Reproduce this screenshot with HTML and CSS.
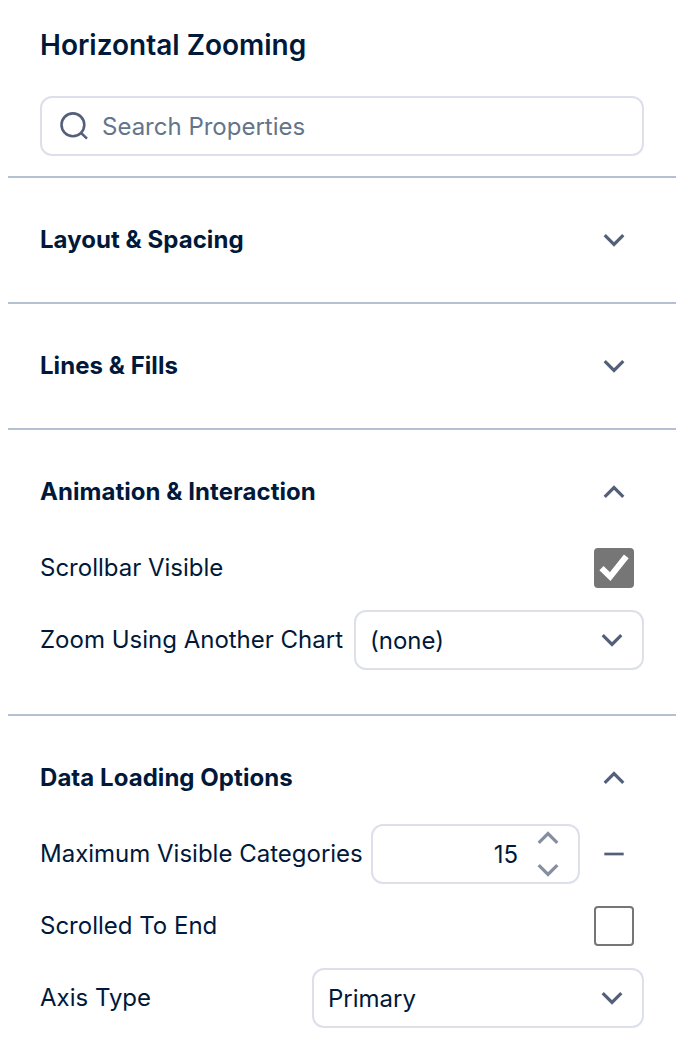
FILE: index.html
```
<!DOCTYPE html>
<html lang="en">
<head>
  <meta charset="UTF-8" />
  <title>Horizontal Zooming</title>
  <link rel="stylesheet" href="styles.css">
</head>
<body>

  <!-- Shared icons -->
  <svg class="sprite" xmlns="http://www.w3.org/2000/svg">
    <symbol id="down" viewBox="0 0 24 16"><path d="M2.7 3.2 L12 12.4 L21.3 3.2" /></symbol>
    <symbol id="up" viewBox="0 0 24 16"><path d="M2.7 12.8 L12 3.6 L21.3 12.8" /></symbol>
  </svg>

  <div class="panel">
    <div class="panel-top">
      <h1>Horizontal Zooming</h1>
      <label class="search">
        <svg class="search-icon" viewBox="0 0 32 32"><circle cx="14.9" cy="14.8" r="11.4" /><path d="M23 22.9 L29 28.6" /></svg>
        <input type="text" placeholder="Search Properties">
      </label>
    </div>

    <div class="section">
      <div class="section-header">
        <h2>Layout &amp; Spacing</h2>
        <span class="slot"><svg class="chevron"><use href="#down" /></svg></span>
      </div>
    </div>

    <div class="section">
      <div class="section-header">
        <h2>Lines &amp; Fills</h2>
        <span class="slot"><svg class="chevron"><use href="#down" /></svg></span>
      </div>
    </div>

    <div class="section open">
      <div class="section-header">
        <h2>Animation &amp; Interaction</h2>
        <span class="slot"><svg class="chevron"><use href="#up" /></svg></span>
      </div>
      <div class="row">
        <span class="label">Scrollbar Visible</span>
        <span class="checkbox checked"><svg viewBox="0 0 40 40"><path d="M7.5 20.2 L16.2 28.6 L32.3 8.3" /></svg></span>
      </div>
      <div class="row">
        <span class="label">Zoom Using Another Chart</span>
        <div class="field select-chart">
          <span>(none)</span>
          <svg class="chevron"><use href="#down" /></svg>
        </div>
      </div>
    </div>

    <div class="section open">
      <div class="section-header">
        <h2>Data Loading Options</h2>
        <span class="slot"><svg class="chevron"><use href="#up" /></svg></span>
      </div>
      <div class="row">
        <span class="label">Maximum Visible Categories</span>
        <div class="field number">
          <span>15</span>
          <div class="spinner">
            <svg class="chevron"><use href="#up" /></svg>
            <svg class="chevron"><use href="#down" /></svg>
          </div>
        </div>
        <span class="slot"><svg class="minus" viewBox="0 0 20 4"><path d="M0.3 2 H19.7" /></svg></span>
      </div>
      <div class="row">
        <span class="label">Scrolled To End</span>
        <span class="checkbox"></span>
      </div>
      <div class="row">
        <span class="label">Axis Type</span>
        <div class="field select-axis">
          <span>Primary</span>
          <svg class="chevron"><use href="#down" /></svg>
        </div>
      </div>
    </div>
  </div>

</body>
</html>
```

FILE: styles.css
```
* { margin: 0; padding: 0; box-sizing: border-box; }

body {
  background: #fff;
  color: #00193a;
  font-family: Inter, sans-serif;
  font-size: 24px;
  font-weight: 400;
  overflow: hidden;
}

.sprite {
  display: none;
}

.panel {
  width: 668px;
  margin-left: 8px;
}

.panel-top {
  height: 178px;
  padding: 24px 32px 0;
  border-bottom: 2px solid #b5c0d3;
}

h1 {
  font-size: 28px;
  font-weight: 600;
  line-height: 42px;
  margin-bottom: 30px;
}

h2 {
  font-size: 24px;
  font-weight: 700;
  letter-spacing: 0.05px;
  padding-bottom: 2px;
}

/* Inputs */
.search, .field {
  display: flex;
  align-items: center;
  height: 60px;
  border: 2px solid #dddfea;
  border-radius: 12px;
}

.search {
  gap: 12px;
  padding: 0 16px;
}

.search-icon {
  width: 32px;
  height: 32px;
  fill: none;
  stroke: #54607a;
  stroke-width: 2.6;
}

.search input {
  flex: 1;
  border: none;
  outline: none;
  background: none;
  font: inherit;
}

.search input::placeholder {
  color: #64748b;
}

.field {
  justify-content: space-between;
  padding: 0 18px 0 14px;
}

.select-chart {
  width: 290px;
}

.select-axis {
  width: 332px;
}

.number {
  width: 209px;
  margin-right: 14px;
  justify-content: flex-end;
  gap: 18px;
}

.spinner {
  display: flex;
  flex-direction: column;
  gap: 16px;
  opacity: 0.7;
}

/* Sections */
.section {
  padding: 42px 32px;
  border-bottom: 2px solid #b5c0d3;
}

.section.open {
  padding-bottom: 38px;
}

.section:last-child {
  border-bottom: none;
}

.section-header {
  display: flex;
  align-items: center;
  justify-content: space-between;
  height: 40px;
}

.open .section-header {
  margin-bottom: 20px;
}

.row {
  display: flex;
  align-items: center;
  height: 72px;
}

.label {
  flex: 1;
  padding-bottom: 2px;
  white-space: nowrap;
}

.slot, .checkbox {
  display: flex;
  align-items: center;
  justify-content: center;
  width: 40px;
  height: 40px;
  margin-right: 10px;
}

.checkbox {
  border: 2px solid #767676;
  border-radius: 4px;
}

.checkbox.checked {
  border: none;
  background: #767676;
}

.checkbox svg {
  width: 40px;
  height: 40px;
  fill: none;
  stroke: #fff;
  stroke-width: 6;
}

.chevron {
  width: 24px;
  height: 16px;
  fill: none;
  stroke: #54607a;
  stroke-width: 3.2;
}

.minus {
  width: 20px;
  height: 4px;
  fill: none;
  stroke: #54607a;
  stroke-width: 2.7;
}
```
